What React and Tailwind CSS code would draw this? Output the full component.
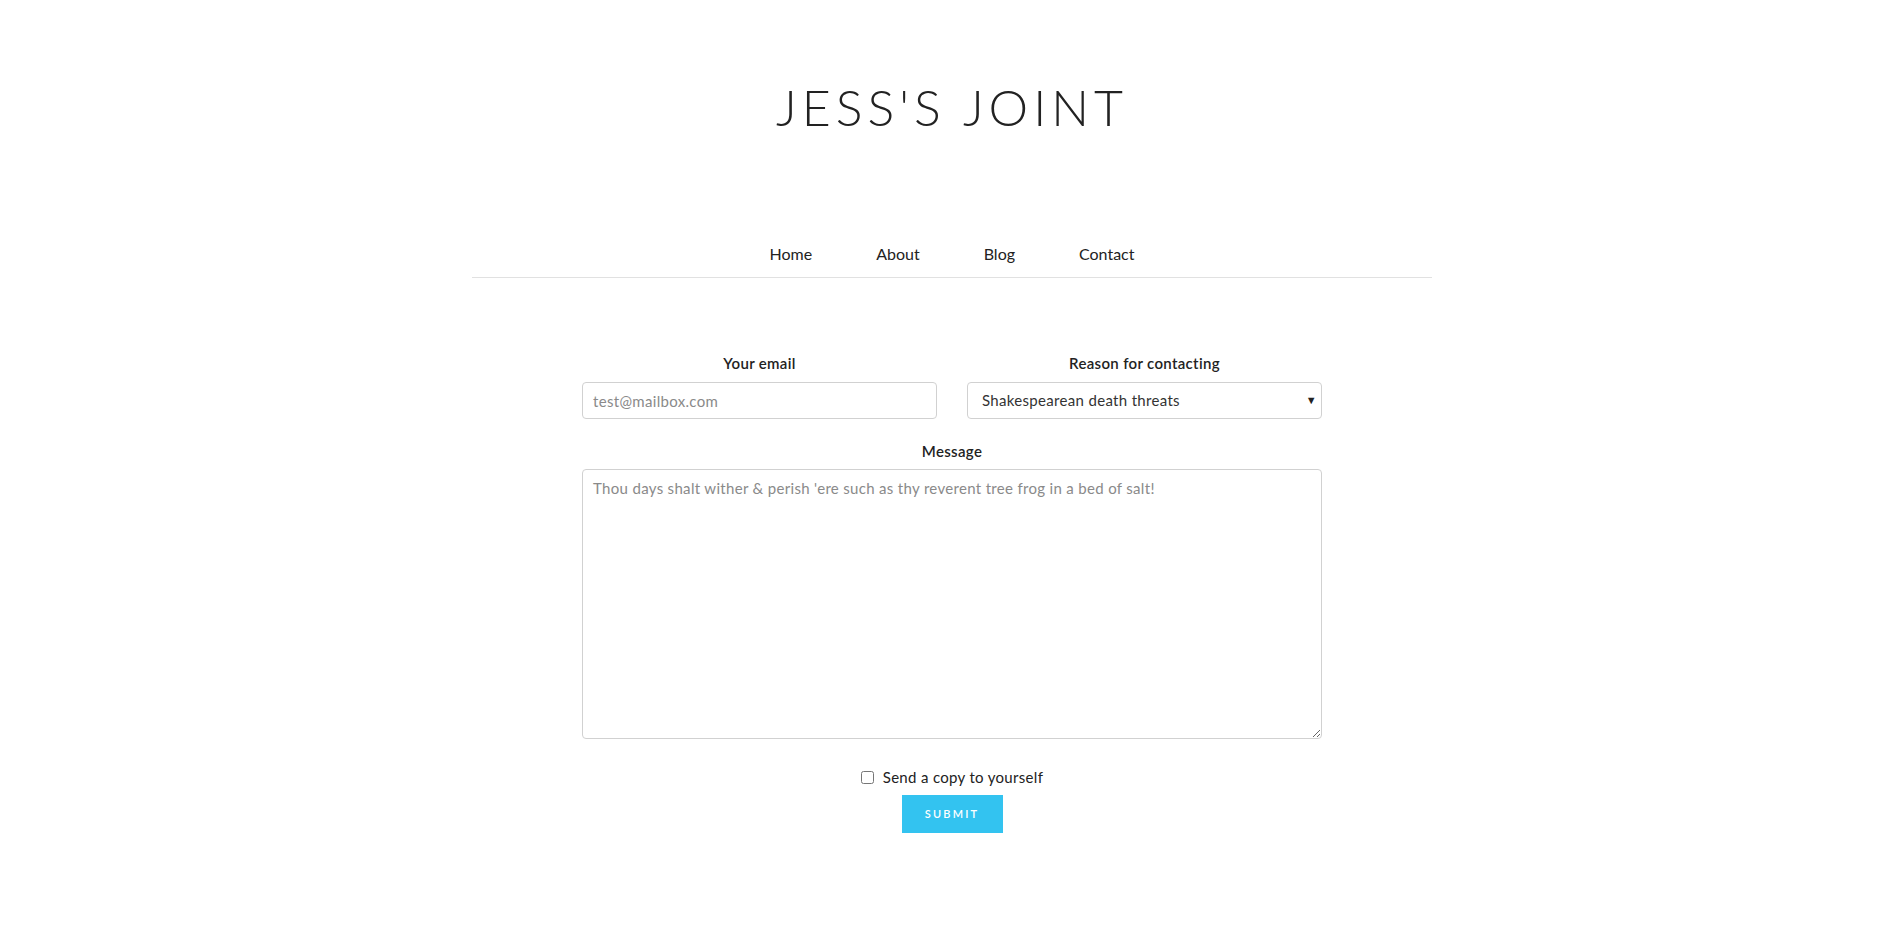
import { useState } from 'react';

const navLinks = ['Home', 'About', 'Blog', 'Contact'];

function App() {
  const [email, setEmail] = useState('');
  const [reason, setReason] = useState('Shakespearean death threats');
  const [message, setMessage] = useState('');
  const [copy, setCopy] = useState(false);

  return (
    <main className="min-h-screen bg-white font-['Lato',sans-serif] text-[#222]">
      <div className="mx-auto w-[960px]">
        <header className="pt-[77px]">
          <h1 className="text-center text-[50px] leading-[60px] font-light tracking-[0.1em] text-[#222]">
            JESS'S JOINT
          </h1>
        </header>

        <nav className="mt-[105px] flex justify-center border-b border-[#E1E1E1] pb-[11px]">
          {navLinks.map((link) => (
            <a key={link} href="#" className="px-[32px] text-[16px] leading-[24px] text-[#222]">
              {link}
            </a>
          ))}
        </nav>

        <form className="mx-auto mt-[73px] w-[740px] tracking-[0.02em]" onSubmit={(e) => e.preventDefault()}>
          <div className="grid grid-cols-2 gap-[30px]">
            <div className="flex flex-col">
              <label className="mb-[7px] text-center text-[15px] leading-[24px] font-semibold">Your email</label>
              <input
                type="email"
                value={email}
                onChange={(e) => setEmail(e.target.value)}
                placeholder="test@mailbox.com"
                className="h-[37px] rounded-[4px] border border-[#D1D1D1] px-[10px] text-[15px] text-[#333] outline-none placeholder:text-[#8a8a8a]"
              />
            </div>
            <div className="flex flex-col">
              <label className="mb-[7px] text-center text-[15px] leading-[24px] font-semibold">Reason for contacting</label>
              <div className="relative">
                <select
                  value={reason}
                  onChange={(e) => setReason(e.target.value)}
                  className="h-[37px] w-full appearance-none rounded-[4px] border border-[#D1D1D1] bg-white pl-[14px] pr-[24px] text-[15px] text-[#333] outline-none"
                >
                  <option>Shakespearean death threats</option>
                  <option>Questions</option>
                  <option>Admiration</option>
                </select>
                <span className="pointer-events-none absolute right-[5px] top-[10px] text-[11px] text-[#222]">▼</span>
              </div>
            </div>
          </div>

          <div className="mt-[20px] flex flex-col">
            <label className="mb-[6px] text-center text-[15px] leading-[24px] font-semibold">Message</label>
            <textarea
              value={message}
              onChange={(e) => setMessage(e.target.value)}
              placeholder="Thou days shalt wither & perish 'ere such as thy reverent tree frog in a bed of salt!"
              className="h-[270px] rounded-[4px] border border-[#D1D1D1] px-[10px] py-[6px] text-[15px] leading-[24px] text-[#333] outline-none placeholder:text-[#8a8a8a]"
            />
          </div>

          <div className="mt-[26px] flex items-center justify-center gap-[9px]">
            <input
              type="checkbox"
              checked={copy}
              onChange={(e) => setCopy(e.target.checked)}
              className="h-[13px] w-[13px]"
            />
            <span className="text-[15px] leading-[24px]">Send a copy to yourself</span>
          </div>

          <div className="mt-[6px] flex justify-center">
            <button
              type="submit"
              className="h-[38px] w-[101px] bg-[#33C3F0] text-[11px] font-semibold tracking-[0.2em] text-white"
            >
              SUBMIT
            </button>
          </div>
        </form>
      </div>
    </main>
  );
}

export default App;
